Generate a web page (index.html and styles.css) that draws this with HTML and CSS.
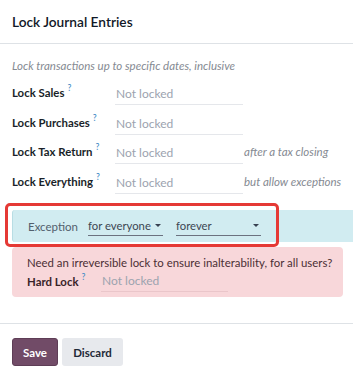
FILE: index.html
```html
<!DOCTYPE html>
<html>
<head>
<meta charset="utf-8">
<link rel="stylesheet" href="styles.css">
</head>
<body>
<div class="modal">
  <header class="head">
    <h1 class="title">Lock Journal Entries</h1>
  </header>
  <main class="body">
    <p class="hint">Lock transactions up to specific dates, inclusive</p>
    <div class="rows">
      <div class="row">
        <label class="lbl">Lock Sales<sup class="q">?</sup></label>
        <div class="field">Not locked</div>
        <span class="side"></span>
      </div>
      <div class="row">
        <label class="lbl">Lock Purchases<sup class="q">?</sup></label>
        <div class="field">Not locked</div>
        <span class="side"></span>
      </div>
      <div class="row">
        <label class="lbl">Lock Tax Return<sup class="q">?</sup></label>
        <div class="field">Not locked</div>
        <span class="side">after a tax closing</span>
      </div>
      <div class="row">
        <label class="lbl">Lock Everything<sup class="q">?</sup></label>
        <div class="field">Not locked</div>
        <span class="side">but allow exceptions</span>
      </div>
    </div>
    <div class="exc-wrap">
      <div class="exc">
        <span class="exc-lbl">Exception</span>
        <div class="sel sel1"><span>for everyone</span><i class="caret"></i></div>
        <div class="sel sel2"><span>forever</span><i class="caret"></i></div>
      </div>
      <div class="hilite"></div>
    </div>
    <div class="danger">
      <div class="danger-q">Need an irreversible lock to ensure inalterability, for all users?</div>
      <div class="danger-row">
        <label class="lbl lbl-hard">Hard Lock<sup class="q">?</sup></label>
        <div class="field field-hard">Not locked</div>
      </div>
    </div>
  </main>
  <footer class="foot">
    <button class="btn btn-primary">Save</button>
    <button class="btn btn-secondary">Discard</button>
  </footer>
</div>
</body>
</html>
```
FILE: styles.css
```css
* { box-sizing: border-box; }
html, body { margin: 0; padding: 0; background: #fff; }
body {
  font-family: "Lato", "Noto Sans", sans-serif;
  font-size: 11.5px;
  color: #374151;
  width: 353px;
  height: 374px;
  overflow: hidden;
}
.modal { display: flex; flex-direction: column; }
.head {
  height: 44px;
  border-bottom: 1px solid #dee2e6;
  display: flex;
  align-items: center;
  padding: 0 12px;
}
.title {
  margin: 0;
  font-size: 13.7px;
  font-weight: 600;
  color: #111827;
}
.body { padding: 14px 0 0 12px; }
.hint {
  margin: 0 0 4px;
  font-style: italic;
  color: #858a92;
  font-size: 11.5px;
  line-height: 16px;
  white-space: nowrap;
}
.rows { display: flex; flex-direction: column; }
.row {
  display: flex;
  align-items: center;
  height: 29.5px;
}
.lbl {
  width: 103px;
  font-weight: 700;
  color: #1a1f29;
  font-size: 11.4px;
  white-space: nowrap;
}
.q {
  color: #4a8fc7;
  font-size: 8.5px;
  font-weight: 600;
  margin-left: 3px;
  vertical-align: 6px;
  line-height: 0;
}
.field {
  width: 128px;
  color: #9ca3af;
  border-bottom: 1px solid #e5e7eb;
  padding: 5px 0 2px 1px;
  font-size: 12px;
  line-height: 17px;
  white-space: nowrap;
}
.side {
  margin-left: 1px;
  font-style: italic;
  color: #858a92;
  font-size: 11.5px;
  white-space: nowrap;
}
.exc-wrap { position: relative; margin-top: 14px; }
.exc {
  background: #d1ecf1;
  height: 32px;
  display: flex;
  align-items: center;
  padding-left: 15px;
  border-radius: 3px 0 0 3px;
  border-left: 1px solid #b8dde4;
}
.exc-lbl { color: #52606d; width: 60px; font-size: 11.5px; }
.sel {
  display: flex;
  align-items: center;
  justify-content: space-between;
  border-bottom: 1px solid #6b7280;
  color: #3d4753;
  font-size: 11.3px;
  line-height: 17px;
  padding-bottom: 1px;
  white-space: nowrap;
}
.sel1 { width: 75px; margin-right: 13px; }
.sel2 { width: 85px; }
.caret {
  width: 0; height: 0;
  border-left: 3px solid transparent;
  border-right: 3px solid transparent;
  border-top: 3px solid #374151;
  margin-right: 2px;
}
.hilite {
  position: absolute;
  left: -7px;
  top: -7px;
  width: 274px;
  height: 44px;
  border: 3px solid #e53935;
  border-radius: 5px;
  pointer-events: none;
}
.danger {
  margin-top: 5px;
  margin-right: 10px;
  background: #f8d7da;
  border-radius: 4px;
  padding: 7px 15px 5px;
  color: #5e3b41;
}
.danger-q { font-size: 11.4px; line-height: 17px; color: #4b2f35; white-space: nowrap; }
.danger-row { display: flex; align-items: center; margin-top: 0; }
.lbl-hard { width: 74px; color: #3a2328; }
.field-hard { width: 127px; border-bottom-color: #eac6ca; padding-top: 1px; }
.foot {
  margin-top: 26px;
  border-top: 1px solid #dee2e6;
  padding: 14px 12px;
  display: flex;
  gap: 4px;
}
.btn {
  font-family: "Lato", "Noto Sans", sans-serif;
  font-weight: 700;
  font-size: 11.5px;
  height: 28px;
  border-radius: 3px;
  border: 1px solid transparent;
  padding: 0;
  cursor: pointer;
}
.btn-primary { background: #714b67; color: #fff; border-color: #5e3d56; width: 46px; }
.btn-secondary { background: #e7e9ed; color: #1f2937; width: 61px; }
```
